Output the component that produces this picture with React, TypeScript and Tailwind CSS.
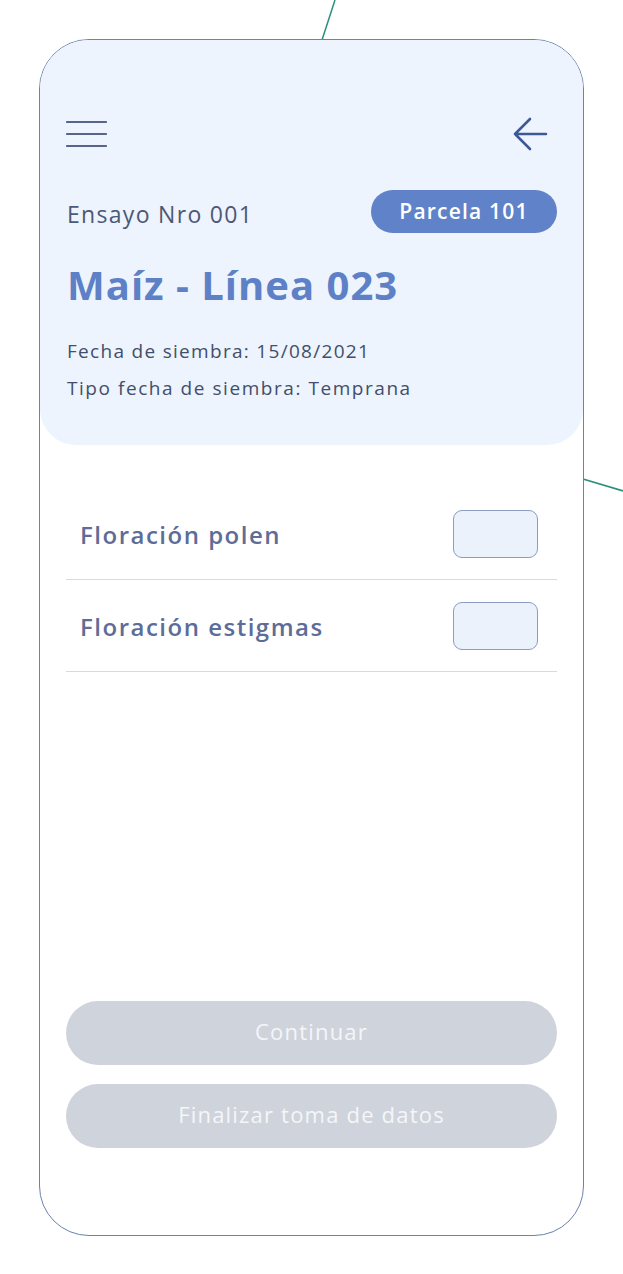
import React from 'react';

const font = { fontFamily: '"Open Sans", "Noto Sans", sans-serif' };

function Check() {
  return (
    <div className="h-[48px] w-[85px] rounded-[9px] border border-[#8d9dc2] bg-[#ebf2fc]" />
  );
}

function Row({ label }: { label: string }) {
  return (
    <div className="flex h-[92px] items-center justify-between border-b border-[#d3dbe8] pl-[14px] pr-[19px]">
      <span className="mt-[3px] text-[24px] font-semibold tracking-[1.5px] text-[#5d6d97]">{label}</span>
      <Check />
    </div>
  );
}

export default function App() {
  return (
    <div className="relative h-[1274px] w-full overflow-hidden bg-white" style={font}>
      {/* prototype connector lines */}
      <svg className="absolute inset-0 h-full w-full" viewBox="0 0 623 1274" fill="none">
        <line x1="335" y1="0" x2="322" y2="40" stroke="#2b8f7c" strokeWidth="1.5" />
        <line x1="583" y1="479" x2="623" y2="491" stroke="#2b8f7c" strokeWidth="1.8" />
      </svg>

      <div className="relative ml-[39px] mt-[39px] flex h-[1197px] w-[545px] flex-col overflow-hidden rounded-[50px] border border-[#6a82ad] bg-white">
        {/* Header */}
        <div className="flex flex-col rounded-b-[36px] bg-[#edf4fd] px-[26px] pb-[44px] pt-[74px]">
          <div className="flex h-[40px] items-center justify-between">
            <svg width="41" height="28" viewBox="0 0 41 28" fill="none">
              <path d="M1 2h39M1 14h39M1 26h39" stroke="#56658a" strokeWidth="2.2" strokeLinecap="round" />
            </svg>
            <svg className="mr-[9px]" width="35" height="34" viewBox="0 0 35 34" fill="none">
              <path d="M33 17H2M17 2L2 17l15 15" stroke="#3c5896" strokeWidth="2.6" strokeLinecap="round" strokeLinejoin="round" />
            </svg>
          </div>

          <div className="mt-[36px] flex items-center justify-between">
            <span className="mt-[6px] pl-[1px] text-[23px] tracking-[1.3px] text-[#4d5875]">Ensayo Nro 001</span>
            <span className="flex h-[43px] w-[186px] items-center justify-center rounded-full bg-[#5f82c8] text-[21px] font-semibold tracking-[1.2px] text-white">
              Parcela 101
            </span>
          </div>

          <h1 className="mt-[28px] pl-[1px] text-[40px] font-bold leading-[48px] tracking-[1px] text-[#5d80c6]">
            Maíz - Línea 023
          </h1>

          <p className="mt-[29px] pl-[1px] text-[19px] leading-[26px] tracking-[1.3px] text-[#434e6b]">
            Fecha de siembra: 15/08/2021
          </p>
          <p className="mt-[11px] pl-[1px] text-[19px] leading-[26px] tracking-[1.55px] text-[#434e6b]">
            Tipo fecha de siembra: Temprana
          </p>
        </div>

        {/* Fields */}
        <div className="mt-[43px] flex flex-col px-[26px]">
          <Row label="Floración polen" />
          <Row label="Floración estigmas" />
        </div>

        {/* Actions */}
        <div className="mt-auto flex flex-col gap-[19px] px-[26px] pb-[87px]">
          <button className="h-[64px] w-full rounded-full bg-[#cfd4dc] pb-[3px] text-[22px] font-medium tracking-[1.2px] text-[#f4f6f9]">
            Continuar
          </button>
          <button className="h-[64px] w-full rounded-full bg-[#cfd4dc] pb-[3px] text-[22px] font-medium tracking-[1.2px] text-[#f4f6f9]">
            Finalizar toma de datos
          </button>
        </div>
      </div>
    </div>
  );
}
